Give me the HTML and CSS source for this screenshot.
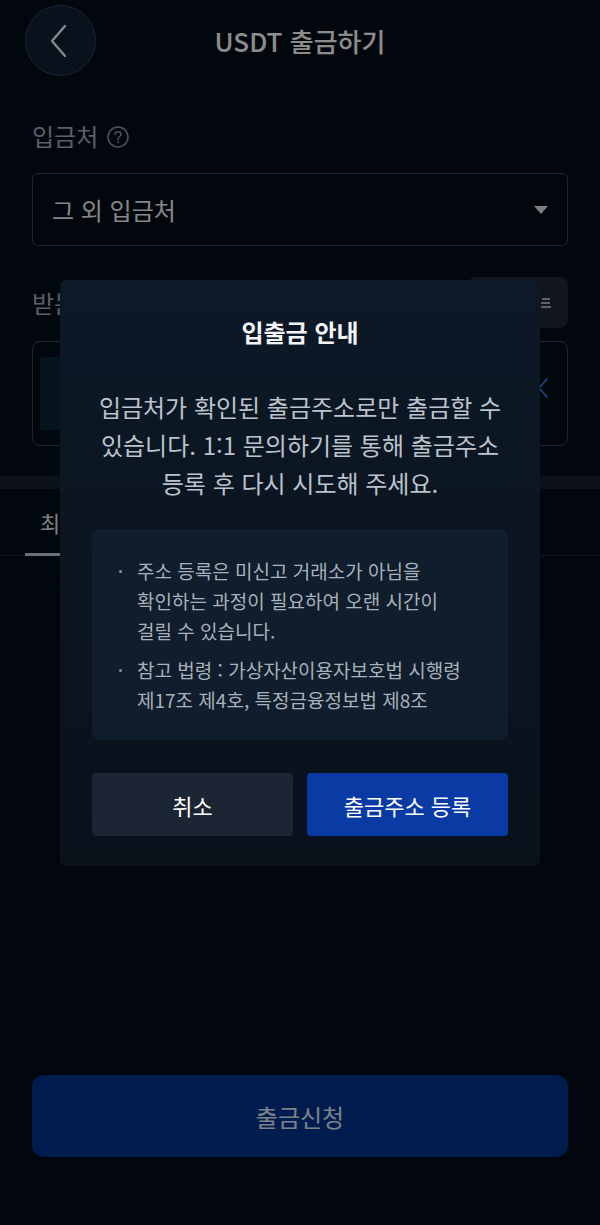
FILE: index.html
```html
<!DOCTYPE html>
<html lang="ko">
<head>
    <meta charset="UTF-8">
    <meta name="viewport" content="width=device-width, initial-scale=1.0">
    <title>USDT 출금하기</title>
    <link rel="stylesheet" href="styles.css">
</head>
<body>
    <div class="page">
        <div class="header">
            <button class="back-button" aria-label="뒤로">
                <svg width="22" height="34" viewBox="0 0 22 34" fill="none">
                    <path d="M17 2 L4 17 L17 32" stroke="currentColor" stroke-width="2.4" stroke-linecap="round" stroke-linejoin="round"/>
                </svg>
            </button>
            <h1>USDT 출금하기</h1>
            <span></span>
        </div>

        <div class="form">
            <div class="label-row">
                <span class="label">입금처</span>
                <svg class="help-icon" width="22" height="22" viewBox="0 0 22 22" fill="none">
                    <circle cx="11" cy="11" r="10" stroke="currentColor" stroke-width="1.5"/>
                    <path d="M8 8.6 C8 6.8 9.3 5.8 11 5.8 C12.7 5.8 14 6.9 14 8.4 C14 10.4 11 10.6 11 12.8 V13.4" stroke="currentColor" stroke-width="1.5" stroke-linecap="round"/>
                    <circle cx="11" cy="16.3" r="1" fill="currentColor"/>
                </svg>
            </div>
            <div class="select-box">
                <span>그 외 입금처</span>
                <span class="caret"></span>
            </div>

            <div class="label-row address-row">
                <span class="label">받는 주소</span>
                <button class="book-button">
                    주소록
                    <svg width="12" height="12" viewBox="0 0 12 12" fill="none">
                        <path d="M2 2 H10 M1 6 H10 M1 10 H11" stroke="currentColor" stroke-width="1.6"/>
                    </svg>
                </button>
            </div>
            <div class="address-box">
                <div class="address-input"></div>
                <svg class="address-arrow" width="12" height="20" viewBox="0 0 12 20" fill="none">
                    <path d="M10 1 L2 10 L10 19" stroke="currentColor" stroke-width="1.6" stroke-linecap="round" stroke-linejoin="round"/>
                </svg>
            </div>
        </div>

        <div class="section-gap"></div>

        <div class="tabs">
            <div class="tab active">최근 출금 주소</div>
            <div class="tab">주소록</div>
        </div>

        <div class="footer">
            <button class="submit-button">출금신청</button>
        </div>
    </div>

    <div class="backdrop">
        <div class="modal">
            <h2>입출금 안내</h2>
            <p class="modal-text">입금처가 확인된 출금주소로만 출금할 수 있습니다. 1:1 문의하기를 통해 출금주소 등록 후 다시 시도해 주세요.</p>
            <ul class="notice">
                <li>주소 등록은 미신고 거래소가 아님을 확인하는 과정이 필요하여 오랜 시간이 걸릴 수 있습니다.</li>
                <li>참고 법령 : 가상자산이용자보호법 시행령 제17조 제4호, 특정금융정보법 제8조</li>
            </ul>
            <div class="modal-buttons">
                <button class="btn-cancel">취소</button>
                <button class="btn-primary">출금주소 등록</button>
            </div>
        </div>
    </div>
</body>
</html>
```

FILE: styles.css
```css
* {
    margin: 0;
    padding: 0;
    box-sizing: border-box;
}
body {
    font-family: "Noto Sans CJK KR", "Noto Sans", sans-serif;
    background-color: #050d18;
    color: #f2f4f6;
}
button {
    font-family: inherit;
    border: none;
    cursor: pointer;
}
.page {
    min-height: 100vh;
    display: flex;
    flex-direction: column;
}
.header {
    display: grid;
    grid-template-columns: 71px 1fr 71px;
    align-items: center;
    padding: 5px 25px;
}
.back-button {
    width: 71px;
    height: 71px;
    border-radius: 50%;
    background-color: #122133;
    border: 1px solid #2f4762;
    color: #f0f4f8;
    display: flex;
    align-items: center;
    justify-content: center;
    padding-right: 4px;
}
.header h1 {
    text-align: center;
    font-size: 26px;
    font-weight: 500;
    color: #ffffff;
    line-height: 30px;
}
.form {
    padding: 0 32px;
}
.label-row {
    display: flex;
    align-items: center;
    gap: 9px;
    margin-top: 40px;
}
.label {
    font-size: 24px;
    line-height: 30px;
    color: #a4aebd;
}
.help-icon {
    color: #929aa6;
    margin-top: 2px;
}
.select-box {
    margin-top: 22px;
    height: 73px;
    border: 1px solid #384757;
    border-radius: 6px;
    display: flex;
    align-items: center;
    justify-content: space-between;
    padding: 0 19px 0 19px;
    font-size: 24px;
    color: #f2f4f6;
}
.caret {
    width: 0;
    height: 0;
    border-left: 7px solid transparent;
    border-right: 7px solid transparent;
    border-top: 8px solid #e0e4e8;
}
.address-row {
    margin-top: 31px;
    justify-content: space-between;
    height: 51px;
}
.book-button {
    height: 51px;
    padding: 0 16px 0 14px;
    border-radius: 8px;
    background-color: #1f2835;
    color: #dde3ea;
    font-size: 18px;
    display: flex;
    align-items: center;
    gap: 8px;
}
.address-box {
    margin-top: 13px;
    height: 105px;
    border: 1px solid #384757;
    border-radius: 8px;
    display: flex;
    align-items: center;
    gap: 20px;
    padding: 0 18px 0 7px;
}
.address-input {
    flex: 1;
    height: 73px;
    background-color: #0a2638;
    border-radius: 2px;
}
.address-arrow {
    color: #3587fb;
    margin-bottom: 12px;
}
.section-gap {
    margin-top: 30px;
    height: 13px;
    background-color: #18212c;
}
.tabs {
    display: flex;
    padding: 0 25px;
    border-bottom: 1px solid #1f2c3a;
}
.tab {
    padding: 18px 15px 16px;
    font-size: 22px;
    line-height: 30px;
    color: #a9b6c4;
    border-bottom: 3px solid transparent;
    margin-bottom: -1px;
}
.tab.active {
    color: #dfe5ec;
    border-bottom-color: #c3ccda;
}
.footer {
    margin-top: auto;
    padding: 0 32px 68px;
}
.submit-button {
    width: 100%;
    height: 82px;
    border-radius: 12px;
    background-color: #003390;
    color: #e3ecf6;
    font-size: 24px;
}
.backdrop {
    position: fixed;
    inset: 0;
    background-color: rgba(0, 0, 0, 0.45);
    display: flex;
    justify-content: center;
    align-items: flex-start;
    padding-top: 280px;
}
.modal {
    width: 480px;
    background: linear-gradient(#0d1927, #09111b);
    border-radius: 6px;
    padding: 37px 32px 30px;
    text-align: center;
}
.modal h2 {
    font-size: 24px;
    font-weight: 700;
    line-height: 30px;
    color: #f2f4f6;
}
.modal-text {
    margin-top: 41px;
    font-size: 24px;
    line-height: 38px;
    color: #bcc3cc;
    word-break: keep-all;
}
.notice {
    list-style: none;
    margin-top: 27px;
    background-color: #0f1d2c;
    border-radius: 8px;
    padding: 27px 32px 25px 27px;
    text-align: left;
}
.notice li {
    position: relative;
    padding-left: 18px;
    font-size: 19px;
    line-height: 30px;
    color: #a9b1bb;
    word-break: keep-all;
}
.notice li + li {
    margin-top: 9px;
}
.notice li::before {
    content: "";
    position: absolute;
    left: 0;
    top: 14px;
    width: 3px;
    height: 3px;
    border-radius: 50%;
    background-color: #8a929c;
}
.modal-buttons {
    display: flex;
    gap: 14px;
    margin-top: 33px;
}
.modal-buttons button {
    flex: 1;
    height: 63px;
    border-radius: 4px;
    font-size: 22px;
    color: #ffffff;
}
.btn-cancel {
    background-color: #1b2533;
}
.btn-primary {
    background-color: #0a3ba5;
}
```
